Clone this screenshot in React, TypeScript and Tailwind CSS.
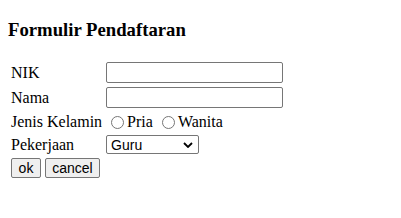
import React from 'react';

const serif = { fontFamily: '"Liberation Serif", "Times New Roman", serif' };

function TextBox() {
  return (
    <input
      type="text"
      className="box-border h-[21px] w-[177px] rounded-[2px] border border-[#767676] bg-white px-[2px] py-px align-middle font-['Liberation_Sans',Arial,sans-serif] text-[13.333px] outline-none"
    />
  );
}

function Radio({ label }: { label: string }) {
  return (
    <>
      <span className="relative top-[1px] mt-[3px] mr-[3px] ml-[5px] inline-block h-[13px] w-[13px] rounded-full border border-[#767676] bg-white align-[-1px]" />
      {label}
    </>
  );
}

export default function App() {
  return (
    <div className="m-2 text-[16px] leading-[normal] text-black" style={serif}>
      <h3 className="my-[18.72px] text-[18.72px] font-bold">Formulir Pendaftaran</h3>
      <table className="border-separate border-spacing-[2px]">
        <tbody>
          <tr>
            <td className="p-px">NIK</td>
            <td className="p-px">
              <TextBox />
            </td>
          </tr>
          <tr>
            <td className="p-px">Nama</td>
            <td className="p-px">
              <TextBox />
            </td>
          </tr>
          <tr>
            <td className="p-px">Jenis Kelamin</td>
            <td className="p-px">
              <Radio label="Pria" /> <Radio label="Wanita" />
            </td>
          </tr>
          <tr>
            <td className="p-px">Pekerjaan</td>
            <td className="p-px">
              <div className="box-border flex h-[19px] w-[93px] items-center justify-between rounded-[2px] border border-[#767676] bg-white pr-[4px] pl-[4px] align-middle font-['Liberation_Sans',Arial,sans-serif] text-[14px]">
                <span>Guru</span>
                <svg width="10" height="6" viewBox="0 0 10 6" className="mr-[1px]">
                  <path d="M1 1l4 4 4-4" fill="none" stroke="#000" strokeWidth="1.8" />
                </svg>
              </div>
            </td>
          </tr>
          <tr>
            <td className="p-px" colSpan={2}>
              <button className="box-border h-[20px] w-[30px] rounded-[2px] border border-[#767676] bg-[#efefef] font-['Liberation_Sans',Arial,sans-serif] text-[14px]">
                ok
              </button>{' '}
              <button className="box-border h-[20px] w-[55px] rounded-[2px] border border-[#767676] bg-[#efefef] font-['Liberation_Sans',Arial,sans-serif] text-[14px]">
                cancel
              </button>
            </td>
          </tr>
        </tbody>
      </table>
    </div>
  );
}
